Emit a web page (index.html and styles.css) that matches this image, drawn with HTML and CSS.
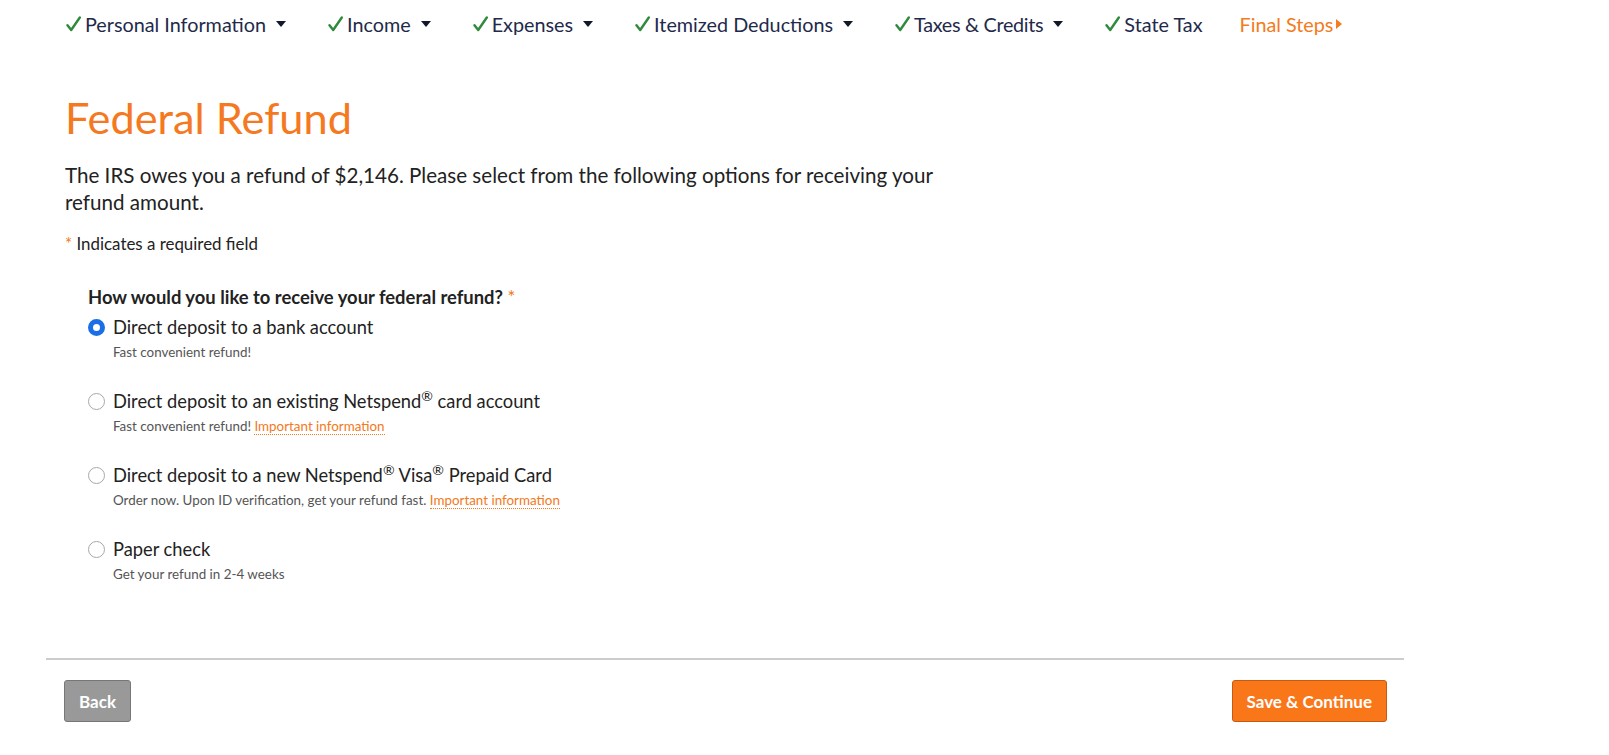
FILE: index.html
```html
<!DOCTYPE html>
<html lang="en">
<head>
<meta charset="utf-8">
<title>Federal Refund</title>
<link rel="stylesheet" href="styles.css">
</head>
<body>
<nav class="steps">
  <div class="step done"><svg class="check" viewBox="0 0 15 16" aria-hidden="true"><path d="M1.5 9.2 L5.2 14 L13.8 1.5"/></svg>Personal Information<span class="caret"></span></div>
  <div class="step done"><svg class="check" viewBox="0 0 15 16" aria-hidden="true"><path d="M1.5 9.2 L5.2 14 L13.8 1.5"/></svg>Income<span class="caret"></span></div>
  <div class="step done"><svg class="check" viewBox="0 0 15 16" aria-hidden="true"><path d="M1.5 9.2 L5.2 14 L13.8 1.5"/></svg>Expenses<span class="caret"></span></div>
  <div class="step done"><svg class="check" viewBox="0 0 15 16" aria-hidden="true"><path d="M1.5 9.2 L5.2 14 L13.8 1.5"/></svg>Itemized Deductions<span class="caret"></span></div>
  <div class="step done"><svg class="check" viewBox="0 0 15 16" aria-hidden="true"><path d="M1.5 9.2 L5.2 14 L13.8 1.5"/></svg><span class="tight">Taxes &amp; Credits</span><span class="caret"></span></div>
  <div class="step done no-menu"><svg class="check" viewBox="0 0 15 16" aria-hidden="true"><path d="M1.5 9.2 L5.2 14 L13.8 1.5"/></svg>State Tax</div>
  <div class="step current">Final Steps<span class="caret-right"></span></div>
</nav>

<main class="page">
  <h1 class="title">Federal Refund</h1>
  <p class="intro">The IRS owes you a refund of $2,146. Please select from the following options for receiving your refund amount.</p>
  <p class="required-note"><span class="star">*</span> Indicates a required field</p>

  <fieldset class="question">
    <legend class="question-label">How would you like to receive your federal refund? <span class="star">*</span></legend>

    <div class="option">
      <div class="option-row"><span class="radio checked"></span><span class="option-label">Direct deposit to a bank account</span></div>
      <div class="option-sub">Fast convenient refund!</div>
    </div>

    <div class="option">
      <div class="option-row"><span class="radio"></span><span class="option-label">Direct deposit to an existing Netspend<sup>&reg;</sup> card account</span></div>
      <div class="option-sub">Fast convenient refund! <a class="info-link">Important information</a></div>
    </div>

    <div class="option">
      <div class="option-row"><span class="radio"></span><span class="option-label">Direct deposit to a new Netspend<sup>&reg;</sup> Visa<sup>&reg;</sup> Prepaid Card</span></div>
      <div class="option-sub">Order now. Upon ID verification, get your refund fast. <a class="info-link">Important information</a></div>
    </div>

    <div class="option">
      <div class="option-row"><span class="radio"></span><span class="option-label">Paper check</span></div>
      <div class="option-sub">Get your refund in 2-4 weeks</div>
    </div>
  </fieldset>

  <div class="footer">
    <button class="btn btn-back">Back</button>
    <button class="btn btn-primary">Save &amp; Continue</button>
  </div>
</main>
</body>
</html>
```

FILE: styles.css
```css
* { box-sizing: border-box; }

html, body {
  margin: 0;
  padding: 0;
  background: #ffffff;
}

body {
  font-family: Lato, "Open Sans", "Liberation Sans", sans-serif;
  color: #222222;
}

.steps {
  display: flex;
  align-items: center;
  padding: 10px 0 0 66px;
  height: 38px;
  font-size: 19.8px;
  color: #1f2a4a;
}

.step {
  display: flex;
  align-items: center;
  margin-right: 42px;
  white-space: nowrap;
}

.step.no-menu {
  margin-right: 37px;
}

.tight {
  letter-spacing: -0.3px;
}

.check {
  flex: none;
  width: 15px;
  height: 16px;
  margin-right: 4px;
  fill: none;
  stroke: #2f8a3c;
  stroke-width: 2.4;
  stroke-linecap: round;
  stroke-linejoin: round;
}

.caret {
  display: inline-block;
  width: 0;
  height: 0;
  margin-left: 10px;
  border-left: 5px solid transparent;
  border-right: 5px solid transparent;
  border-top: 6px solid #111827;
}

.step.current {
  color: #f47b20;
}

.caret-right {
  display: inline-block;
  width: 0;
  height: 0;
  margin-left: 3px;
  border-top: 5px solid transparent;
  border-bottom: 5px solid transparent;
  border-left: 6px solid #f47b20;
}

.page {
  margin: 0 205px 0 46px;
}

.title {
  margin: 54px 0 0 19px;
  font-size: 43.3px;
  font-weight: 400;
  line-height: 50px;
  color: #f47920;
}

.intro {
  margin: 20px 0 0 19px;
  width: 900px;
  font-size: 20.6px;
  line-height: 27px;
  color: #222222;
}

.required-note {
  margin: 18px 0 0 19px;
  font-size: 16.9px;
  line-height: 20px;
  color: #222222;
}

.star {
  color: #f47920;
  font-weight: 400;
}

.question {
  margin: 32px 0 0 42px;
  padding: 0;
  border: 0;
}

.question-label {
  padding: 0;
  font-size: 18.4px;
  font-weight: 700;
  line-height: 22px;
  color: #222222;
  margin-bottom: 8px;
}

.option {
  margin-bottom: 30px;
}

.option:last-child {
  margin-bottom: 0;
}

.option-row {
  display: flex;
  align-items: center;
  height: 22px;
}

.radio {
  flex: none;
  width: 17px;
  height: 17px;
  border-radius: 50%;
  border: 1px solid #a8a8a8;
  background: #fff;
  margin-right: 8px;
}

.radio.checked {
  border: 5px solid #1a6fe6;
}

.option-label {
  font-size: 18.3px;
  line-height: 22px;
  color: #222222;
  white-space: nowrap;
}

.option-label sup {
  font-size: 14px;
  line-height: 0;
  vertical-align: 7px;
}

.option-sub {
  margin: 6px 0 0 25px;
  font-size: 13.4px;
  line-height: 16px;
  color: #555555;
}

.info-link {
  color: #f47920;
  border-bottom: 1px dotted #f47920;
  cursor: pointer;
}

.footer {
  display: flex;
  justify-content: space-between;
  margin-top: 76px;
  padding: 20px 17px 0 18px;
  border-top: 2px solid #cccccc;
}

.btn {
  height: 42px;
  padding: 0 14px;
  font-family: Lato, "Open Sans", "Liberation Sans", sans-serif;
  font-size: 17px;
  font-weight: 700;
  color: #ffffff;
  border-radius: 3px;
  cursor: pointer;
}

.btn-back {
  background: #999999;
  border: 1px solid #777777;
}

.btn-primary {
  background: #f97619;
  border: 1px solid #c65a10;
}
```
